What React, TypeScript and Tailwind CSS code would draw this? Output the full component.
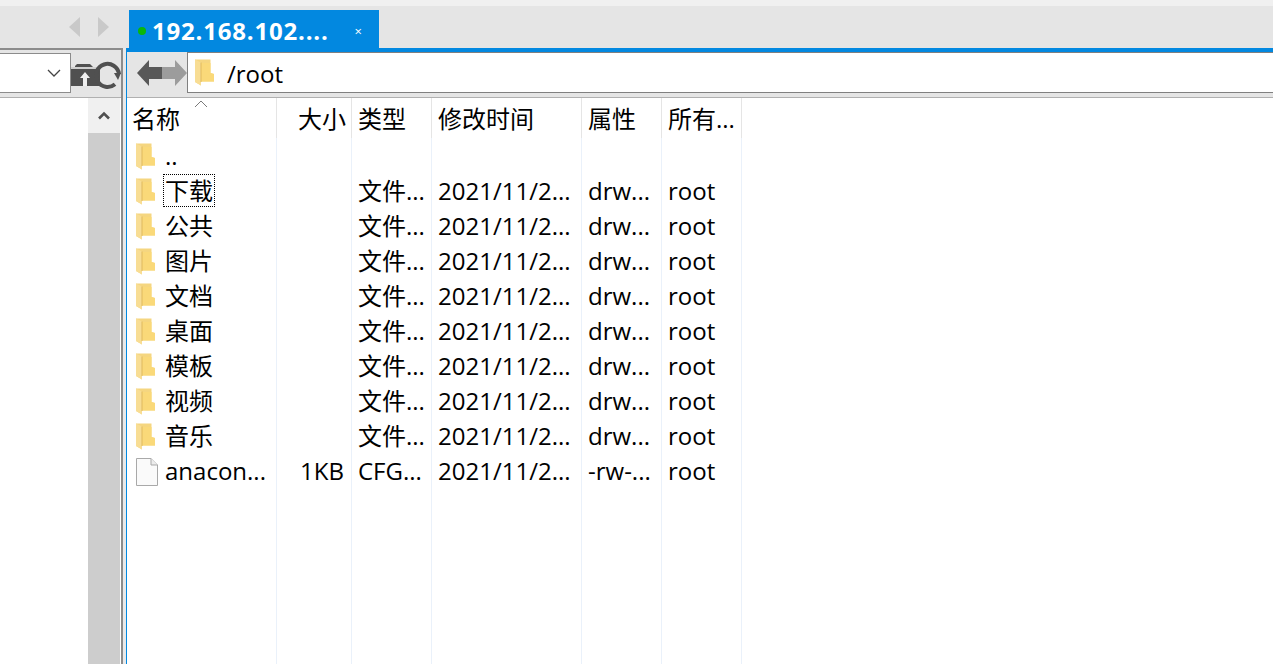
const FONT = "[font-family:'Open_Sans','Noto_Sans_CJK_SC',sans-serif]";

const ROWS = [
  { name: "..", size: "", type: "", time: "", attr: "", owner: "" },
  { name: "下载", size: "", type: "文件...", time: "2021/11/2...", attr: "drw...", owner: "root", focused: true },
  { name: "公共", size: "", type: "文件...", time: "2021/11/2...", attr: "drw...", owner: "root" },
  { name: "图片", size: "", type: "文件...", time: "2021/11/2...", attr: "drw...", owner: "root" },
  { name: "文档", size: "", type: "文件...", time: "2021/11/2...", attr: "drw...", owner: "root" },
  { name: "桌面", size: "", type: "文件...", time: "2021/11/2...", attr: "drw...", owner: "root" },
  { name: "模板", size: "", type: "文件...", time: "2021/11/2...", attr: "drw...", owner: "root" },
  { name: "视频", size: "", type: "文件...", time: "2021/11/2...", attr: "drw...", owner: "root" },
  { name: "音乐", size: "", type: "文件...", time: "2021/11/2...", attr: "drw...", owner: "root" },
  { name: "anacon...", size: "1KB", type: "CFG...", time: "2021/11/2...", attr: "-rw-...", owner: "root", file: true },
];

function FolderIcon() {
  return (
    <svg width="19" height="27" viewBox="0 0 19 27" className="shrink-0">
      <path d="M0 0.5 H15.5 V14 L19 15 V22.5 H6 V26.5 L0 23 Z" fill="#f5d680" />
      <path d="M6 4 H15.5 V14 L19 15 V22.5 H6 Z" fill="#fad979" />
      <path d="M0 0.5 L6 3.5 V26.5 L0 23 Z" fill="#f8dd94" />
      <path d="M6 3.5 V23" stroke="#dfb95e" strokeWidth="1" />
    </svg>
  );
}

function FileIcon() {
  return (
    <svg width="22" height="28" viewBox="0 0 22 28" className="shrink-0">
      <path d="M0.5 0.5 H15 L21.5 7 V27.5 H0.5 Z" fill="#fafafa" stroke="#a9a9a9" />
      <path d="M15 0.5 V7 H21.5" fill="#ececec" stroke="#a9a9a9" />
    </svg>
  );
}

function Arrows() {
  return (
    <svg width="52" height="30" viewBox="0 0 52 30" className="shrink-0 blur-[0.6px]">
      <path d="M26 9 H13 V2 L1 15 L13 28 V21 H26 Z" fill="#585858" />
      <path d="M26 9 H39 V2 L51 15 L39 28 V21 H26 Z" fill="#9c9c9c" />
    </svg>
  );
}

function LockRefresh() {
  return (
    <svg width="50" height="36" viewBox="0 0 50 36" className="mt-[4px] shrink-0 blur-[0.5px]">
      <path d="M4 9 L6 7 H19 L22 10 H4 Z" fill="#505050" />
      <rect x="0" y="10" width="28" height="2" fill="#cfcfcf" />
      <rect x="0" y="12" width="29" height="17" fill="#505050" />
      <path d="M14 15 L19 21 H16 V29 H12 V21 H9 Z" fill="#efefef" />
      <path d="M48 17 A11.5 11.5 0 1 0 44 27.2" fill="none" stroke="#505050" strokeWidth="4" />
      <path d="M43 16 H50 L47 23 Z" fill="#505050" />
    </svg>
  );
}

function Header({ label, className }: { label: string; className: string }) {
  return (
    <div className={`flex h-[40px] items-center border-r border-[#e5e5e5] pt-[2px] ${className}`}>
      {label}
    </div>
  );
}

export default function App() {
  return (
    <div className={`flex h-[664px] w-[1273px] flex-col overflow-hidden bg-white text-[24px] leading-none text-black ${FONT}`}>
      {/* Tab strip */}
      <div className="h-[6px] shrink-0 bg-[#f0f0f0]" />
      <div className="flex h-[42px] shrink-0 bg-[#e5e5e5]">
        <div className="flex w-[129px] items-center pl-[69px]">
          <svg width="12" height="20" viewBox="0 0 12 20">
            <path d="M11 0 V20 L0 10 Z" fill="#c9c9c9" />
          </svg>
          <svg width="12" height="20" viewBox="0 0 12 20" className="ml-[17px]">
            <path d="M0 0 V20 L11 10 Z" fill="#c9c9c9" />
          </svg>
        </div>
        <div className="mt-[4px] flex h-[38px] w-[250px] items-center bg-[#0288e0] pt-[4px] pl-[9px] text-white">
          <span className="size-[8px] shrink-0 rounded-full bg-[#0ab70a]" />
          <span className="ml-[6px] font-bold tracking-[0.8px]">192.168.102....</span>
          <span className="ml-[26px] text-[13px]">×</span>
        </div>
      </div>

      <div className="flex min-h-0 flex-1">
        {/* Left pane */}
        <div className="flex w-[123px] flex-col border-t-2 border-r-2 border-[#8c8c8c]">
          <div className="flex h-[47px] shrink-0 items-start bg-[#e5e5e5] pt-[3px]">
            <div className="flex h-[40px] w-[71px] shrink-0 items-center justify-end border border-l-0 border-[#8c8c8c] bg-white pr-[9px]">
              <svg width="14" height="8" viewBox="0 0 14 8">
                <path d="M1 1 L7 7 L13 1" fill="none" stroke="#444" strokeWidth="1.3" />
              </svg>
            </div>
            <LockRefresh />
          </div>
          <div className="h-px shrink-0 bg-[#b0b0b0]" />
          <div className="flex min-h-0 flex-1 justify-end bg-white pr-px">
            <div className="flex w-[32px] flex-col bg-[#cdcdcd]">
              <div className="flex h-[35px] items-center justify-center bg-[#f0f0f0]">
                <svg width="14" height="9" viewBox="0 0 14 9">
                  <path d="M2 7.5 L7 2.5 L12 7.5" fill="none" stroke="#505050" strokeWidth="2.6" />
                </svg>
              </div>
            </div>
          </div>
        </div>
        <div className="w-[3px] bg-[#e9e9e9]" />

        {/* Right pane */}
        <div className="flex min-w-0 flex-1 flex-col border-t-4 border-l border-[#0288e0]">
          <div className="flex h-[45px] shrink-0 bg-[#e5e5e5]">
            <div className="flex w-[60px] items-center pb-[4px] pl-[9px]">
              <Arrows />
            </div>
            <div className="flex h-[41px] flex-1 items-center border-y border-l border-[#808080] bg-white pl-[7px]">
              <FolderIcon />
              <span className="ml-[13px] pt-[2px]">/root</span>
            </div>
          </div>
          <div className="h-px shrink-0 bg-[#b0b0b0]" />

          <div className="relative min-h-0 flex-1 overflow-hidden">
            <span className="absolute top-[2px] left-[67px]">
              <svg width="14" height="8" viewBox="0 0 14 8">
                <path d="M1 7 L7 1 L13 7" fill="none" stroke="#7a7a7a" strokeWidth="1" />
              </svg>
            </span>
            <div className="flex">
              <Header label="名称" className="w-[150px] pl-[5px]" />
              <Header label="大小" className="w-[75px] justify-end pr-[5px]" />
              <Header label="类型" className="w-[80px] pl-[6px]" />
              <Header label="修改时间" className="w-[150px] pl-[6px]" />
              <Header label="属性" className="w-[80px] pl-[6px]" />
              <Header label="所有..." className="w-[80px] pl-[6px]" />
            </div>
            <div className="flex flex-col">
              {ROWS.map((row) => (
                <div key={row.name} className="flex h-[35px] shrink-0">
                  <div className="flex w-[150px] items-center border-r border-[#eaf1fa] pl-[9px]">
                    <div className="flex w-[22px] justify-start pt-[2px]">
                      {row.file ? <FileIcon /> : <FolderIcon />}
                    </div>
                    <span
                      className={`ml-[5px] flex h-[33px] items-center px-px ${
                        row.focused ? "border border-dotted border-black" : "border border-transparent"
                      }`}
                    >
                      {row.name}
                    </span>
                  </div>
                  <div className="flex w-[75px] items-center justify-end border-r border-[#eaf1fa] pr-[7px]">
                    {row.size}
                  </div>
                  <div className="flex w-[80px] items-center border-r border-[#eaf1fa] pl-[6px]">{row.type}</div>
                  <div className="flex w-[150px] items-center border-r border-[#eaf1fa] pl-[6px]">{row.time}</div>
                  <div className="flex w-[80px] items-center border-r border-[#eaf1fa] pl-[6px]">{row.attr}</div>
                  <div className="flex w-[80px] items-center border-r border-[#eaf1fa] pl-[6px]">{row.owner}</div>
                </div>
              ))}
              <div className="flex h-[200px] shrink-0">
                <div className="w-[150px] border-r border-[#eaf1fa]" />
                <div className="w-[75px] border-r border-[#eaf1fa]" />
                <div className="w-[80px] border-r border-[#eaf1fa]" />
                <div className="w-[150px] border-r border-[#eaf1fa]" />
                <div className="w-[80px] border-r border-[#eaf1fa]" />
                <div className="w-[80px] border-r border-[#eaf1fa]" />
              </div>
            </div>
          </div>
        </div>
      </div>
    </div>
  );
}
